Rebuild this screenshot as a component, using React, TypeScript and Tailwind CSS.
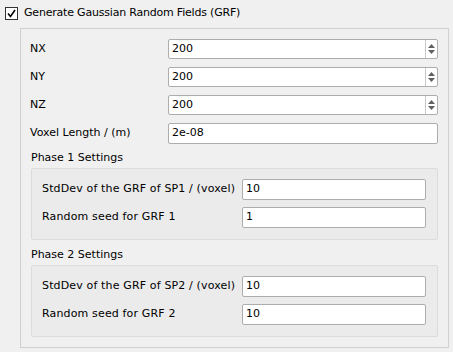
import { useState } from 'react';

const SpinBox = ({ value }: { value: string }) => (
  <div className="flex h-[20px] flex-1 items-stretch rounded-[2px] border border-[#adadad] bg-white">
    <div className="flex flex-1 items-center pl-[3px] text-black">{value}</div>
    <div className="flex w-[12px] flex-col items-center justify-center gap-[2px] border-l border-[#c8c8c8]">
      <svg width="7" height="4" viewBox="0 0 7 4">
        <path d="M0 4 L3.5 0 L7 4 Z" fill="#606060" />
      </svg>
      <svg width="7" height="4" viewBox="0 0 7 4">
        <path d="M0 0 L3.5 4 L7 0 Z" fill="#606060" />
      </svg>
    </div>
  </div>
);

const LineEdit = ({ value }: { value: string }) => (
  <div className="flex h-[21px] flex-1 items-center rounded-[2px] border border-[#adadad] bg-white pl-[3px] text-black">
    {value}
  </div>
);

const Row = ({ label, children, labelW }: { label: string; children: React.ReactNode; labelW: string }) => (
  <div className="flex items-center">
    <div className={labelW}>{label}</div>
    {children}
  </div>
);

const PhaseBox = ({ n, sd, seed }: { n: number; sd: string; seed: string }) => (
  <>
    <div className="ml-[1px] h-[16px] leading-[16px]">Phase {n} Settings</div>
    <div className="mt-[2px] ml-[1px] flex flex-col gap-[7px] rounded-[2px] border border-[#dcdcdc] bg-[#ebebeb] pt-[10px] pr-[11px] pb-[11px] pl-[10px]">
      <Row label={`StdDev of the GRF of SP${n} / (voxel)`} labelW="w-[200px] shrink-0 tracking-[0.15px]">
        <LineEdit value={sd} />
      </Row>
      <Row label={`Random seed for GRF ${n}`} labelW="w-[200px] shrink-0 tracking-[0.15px]">
        <LineEdit value={seed} />
      </Row>
    </div>
  </>
);

export default function App() {
  const [checked] = useState(true);

  return (
    <div
      className="h-[352px] w-[453px] overflow-hidden bg-[#f0f0f0] text-[11px] text-black"
      style={{ fontFamily: '"DejaVu Sans", sans-serif' }}
    >
      <div className="flex h-[28px] items-center pl-[5px] pb-[1px]">
        <div className="flex h-[13px] w-[13px] items-center justify-center border border-[#333] bg-white">
          {checked && (
            <svg width="9" height="9" viewBox="0 0 9 9">
              <path d="M1 4.5 L3.5 7.5 L8 1" fill="none" stroke="#000" strokeWidth="1.6" />
            </svg>
          )}
        </div>
        <span className="ml-[6px] tracking-[-0.2px]">Generate Gaussian Random Fields (GRF)</span>
      </div>

      <div className="ml-[20px] h-[320px] w-[429px] border border-[#d0d0d0] pt-[10px] pr-[10px] pl-[9px]">
        <div className="flex flex-col gap-[8px]">
          <Row label="NX" labelW="w-[138px] shrink-0">
            <SpinBox value="200" />
          </Row>
          <Row label="NY" labelW="w-[138px] shrink-0">
            <SpinBox value="200" />
          </Row>
          <Row label="NZ" labelW="w-[138px] shrink-0">
            <SpinBox value="200" />
          </Row>
          <Row label="Voxel Length / (m)" labelW="w-[138px] shrink-0">
            <LineEdit value="2e-08" />
          </Row>
        </div>
        <div className="mt-[6px]">
          <PhaseBox n={1} sd="10" seed="1" />
        </div>
        <div className="mt-[7px]">
          <PhaseBox n={2} sd="10" seed="10" />
        </div>
      </div>
    </div>
  );
}
